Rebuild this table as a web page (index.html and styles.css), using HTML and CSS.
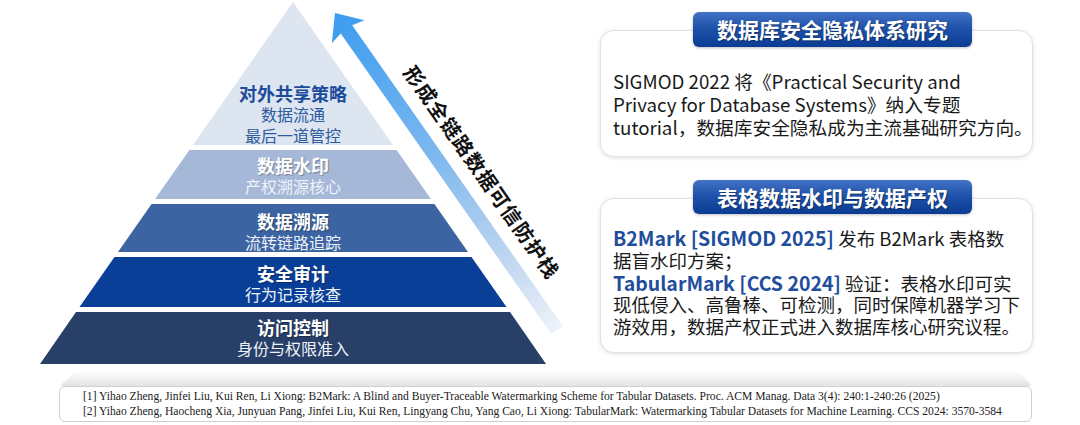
FILE: index.html
```html
<!DOCTYPE html>
<html lang="zh-CN">
<head>
<meta charset="utf-8">
<title>数据库安全隐私体系</title>
<link rel="stylesheet" href="styles.css">
</head>
<body>
<div class="page">
  <div class="main">
    <div class="pyramid">
      <div class="layer l1">
        <div class="t">对外共享策略</div>
        <div class="s">数据流通</div>
        <div class="s">最后一道管控</div>
      </div>
      <div class="layer l2">
        <div class="t">数据水印</div>
        <div class="s">产权溯源核心</div>
      </div>
      <div class="layer l3">
        <div class="t">数据溯源</div>
        <div class="s">流转链路追踪</div>
      </div>
      <div class="layer l4">
        <div class="t">安全审计</div>
        <div class="s">行为记录核查</div>
      </div>
      <div class="layer l5">
        <div class="t">访问控制</div>
        <div class="s">身份与权限准入</div>
      </div>
    </div>
    <div class="side">
      <section class="panel p1">
        <div class="badge">数据库安全隐私体系研究</div>
        <div class="card">
          <p>SIGMOD 2022 将《Practical Security and<br>Privacy for Database Systems》纳入专题<br>tutorial，数据库安全隐私成为主流基础研究方向。</p>
        </div>
      </section>
      <section class="panel p2">
        <div class="badge">表格数据水印与数据产权</div>
        <div class="card">
          <p><b>B2Mark [SIGMOD 2025]</b> 发布 B2Mark 表格数<br>据盲水印方案；<br><b>TabularMark [CCS 2024]</b> 验证：表格水印可实<br>现低侵入、高鲁棒、可检测，同时保障机器学习下<br>游效用，数据产权正式进入数据库核心研究议程。</p>
        </div>
      </section>
    </div>
  </div>
  <div class="shelf"></div>
  <div class="refs">
    <p>[1] Yihao Zheng, Jinfei Liu, Kui Ren, Li Xiong: B2Mark: A Blind and Buyer-Traceable Watermarking Scheme for Tabular Datasets. Proc. ACM Manag. Data 3(4): 240:1-240:26 (2025)</p>
    <p>[2] Yihao Zheng, Haocheng Xia, Junyuan Pang, Jinfei Liu, Kui Ren, Lingyang Chu, Yang Cao, Li Xiong: TabularMark: Watermarking Tabular Datasets for Machine Learning. CCS 2024: 3570-3584</p>
  </div>
  <svg class="arrow" width="1080" height="425" viewBox="0 0 1080 425" aria-hidden="true">
    <defs>
      <linearGradient id="ag" gradientUnits="userSpaceOnUse" x1="0" y1="0" x2="0" y2="387">
        <stop offset="0" stop-color="#3b9cf0"/>
        <stop offset="0.45" stop-color="#7db8ee"/>
        <stop offset="0.8" stop-color="#c4d8f0"/>
        <stop offset="1" stop-color="#eef3fa"/>
      </linearGradient>
    </defs>
    <g transform="translate(335 13) rotate(-35)">
      <polygon points="0,0 20,23 7,20 7,387 -7,387 -7,20 -20,23" fill="url(#ag)"/>
    </g>
  </svg>
  <div class="arrow-label">形成全链路数据可信防护栈</div>
</div>
</body>
</html>
```

FILE: styles.css
```css
html, body {
  margin: 0;
  padding: 0;
  background: #ffffff;
}
.page {
  position: relative;
  width: 1080px;
  height: 425px;
  overflow: hidden;
  font-family: "Noto Sans CJK SC", "Noto Sans", sans-serif;
  color: #1a1a1a;
}
.main {
  display: flex;
  height: 370px;
}
.pyramid {
  margin-left: 40px;
  margin-top: 2px;
  width: 506px;
  display: flex;
  flex-direction: column;
  gap: 5px;
}
.layer {
  width: 506px;
  box-sizing: border-box;
  display: flex;
  flex-direction: column;
  align-items: center;
  line-height: 21px;
  color: #ffffff;
}
.layer .t {
  font-size: 18px;
  font-weight: 700;
  text-shadow: 1px 1px 1px rgba(0, 0, 0, 0.3);
}
.layer .s {
  font-size: 16px;
  color: #eef3fa;
}
.l1 {
  height: 143px;
  padding-top: 80.5px;
  background: #dde5f1;
  clip-path: polygon(253px 0, 353px 100%, 153px 100%);
}
.l1 .t {
  color: #1d4b9b;
  text-shadow: none;
}
.l1 .s {
  color: #2e5b9e;
}
.l2 {
  height: 49px;
  padding-top: 4.5px;
  background: #a6b8d8;
  clip-path: polygon(149.4px 0, 356.6px 0, 390.9px 100%, 115.1px 100%);
}
.l3 {
  height: 48px;
  padding-top: 6.5px;
  background: #3c64a2;
  clip-path: polygon(111.6px 0, 394.4px 0, 428px 100%, 78px 100%);
}
.l4 {
  height: 50px;
  padding-top: 5.5px;
  background: #0a3f97;
  clip-path: polygon(74.5px 0, 431.5px 0, 466.5px 100%, 39.5px 100%);
}
.l5 {
  height: 52px;
  padding-top: 4.5px;
  background: #283f68;
  clip-path: polygon(36px 0, 470px 0, 506px 100%, 0 100%);
}
.side {
  margin-left: 54px;
  width: 433px;
  padding-top: 12px;
}
.panel {
  display: flex;
  flex-direction: column;
}
.p2 {
  margin-top: 23px;
}
.badge {
  position: relative;
  z-index: 1;
  margin-left: 93px;
  width: 279px;
  height: 35px;
  border-radius: 6px;
  background: linear-gradient(to bottom, #4373c6 0%, #1f52aa 45%, #0b3c94 100%);
  box-shadow: 0 1px 3px rgba(0, 0, 0, 0.25);
  color: #ffffff;
  font-size: 21px;
  font-weight: 700;
  line-height: 35px;
  text-align: center;
  text-shadow: 1px 1px 1px rgba(0, 0, 0, 0.35);
}
.p2 .badge {
  height: 34px;
  line-height: 34px;
}
.card {
  box-sizing: border-box;
  margin-top: -17px;
  border: 1px solid #e2e2e2;
  border-radius: 14px;
  background: #ffffff;
  box-shadow: 0 1px 4px rgba(0, 0, 0, 0.12);
  padding: 37.5px 10px 0 12px;
  height: 127px;
}
.card p {
  margin: 0;
  white-space: nowrap;
  font-size: 18.7px;
  line-height: 23px;
}
.p2 .card {
  margin-top: -16px;
  height: 155px;
  padding-top: 28px;
}
.p2 .card p {
  font-size: 18.5px;
  line-height: 21.75px;
}
.card b {
  color: #1f4e9c;
  font-weight: 700;
  font-size: 19.5px;
}
.shelf {
  margin-left: 60px;
  width: 972px;
  height: 16px;
  background: linear-gradient(to bottom, rgba(235, 235, 235, 0) 0%, #e4e4e4 100%);
  clip-path: polygon(17px 0, 957px 0, 972px 100%, 0 100%);
}
.refs {
  box-sizing: border-box;
  margin-left: 59px;
  width: 973px;
  height: 36px;
  border: 1px solid #cfcfcf;
  border-radius: 6px;
  padding: 2px 0 0 23px;
  font-family: "Liberation Serif", "Times New Roman", serif;
  font-size: 11.6px;
  line-height: 15px;
  color: #222222;
}
.refs p {
  margin: 0;
  white-space: nowrap;
}
.arrow {
  position: absolute;
  left: 0;
  top: 0;
  pointer-events: none;
}
.arrow-label {
  position: absolute;
  left: 482px;
  top: 172px;
  transform: translate(-50%, -50%) rotate(55deg);
  white-space: nowrap;
  font-size: 20px;
  font-weight: 700;
  letter-spacing: 1.2px;
  line-height: 26px;
  color: #111111;
  text-shadow: 0 0 2px #ffffff;
}
```
